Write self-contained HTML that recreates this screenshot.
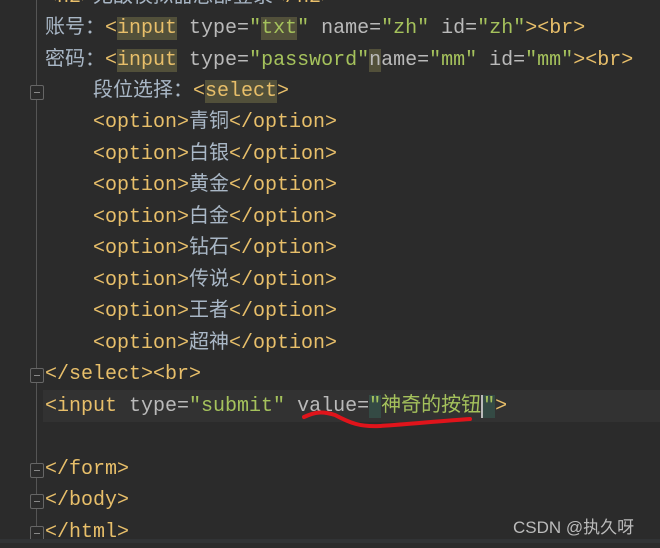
<!DOCTYPE html>
<html><head><meta charset="utf-8"><style>
body{margin:0;width:660px;height:543px;background:#2b2b2b;overflow:hidden;position:relative;font-family:"Liberation Mono","Noto Sans CJK SC",monospace;font-size:20px}
.gut{position:absolute;left:36px;top:0;width:1px;height:543px;background:#555}
.l{position:absolute;left:45px;height:31px;line-height:31px;white-space:pre;color:#a9b7c6;margin-top:2px}
.t{color:#e8bf6a}.a{color:#bababa}.v{color:#a5c25c}
.h{background:#52503a}
.cur{position:absolute;left:43px;top:390px;width:617px;height:32px;background:#323232}
.f{position:absolute;left:30px;width:12px;height:13px;background:#2b2b2b;border:1px solid #666;border-radius:2px;margin-top:2px}
.f:after{content:"";position:absolute;left:3px;top:6px;width:6px;height:1px;background:#888}
.sb{position:absolute;left:0;top:539px;width:660px;height:4px;background:#313335}
</style></head><body>
<div class="gut"></div>
<div class="cur"></div>
<div class="l" style="top:-20px"><span class="t">&lt;h2&gt;</span>无敌模拟器总部登录<span class="t">&lt;/h2&gt;</span></div>
<div class="l" style="top:11px">账号：<span class="t">&lt;<span class="h">input</span></span> <span class="a">type=</span><span class="v">"<span class="h">txt</span>"</span> <span class="a">name=</span><span class="v">"zh"</span> <span class="a">id=</span><span class="v">"zh"</span><span class="t">&gt;&lt;br&gt;</span></div>
<div class="l" style="top:43px">密码：<span class="t">&lt;<span class="h">input</span></span> <span class="a">type=</span><span class="v">"password"</span><span class="a"><span class="h">n</span>ame=</span><span class="v">"mm"</span> <span class="a">id=</span><span class="v">"mm"</span><span class="t">&gt;&lt;br&gt;</span></div>
<div class="l" style="top:74px">    段位选择：<span class="t">&lt;<span class="h">select</span>&gt;</span></div>
<div class="l" style="top:105px">    <span class="t">&lt;option&gt;</span>青铜<span class="t">&lt;/option&gt;</span></div>
<div class="l" style="top:137px">    <span class="t">&lt;option&gt;</span>白银<span class="t">&lt;/option&gt;</span></div>
<div class="l" style="top:168px">    <span class="t">&lt;option&gt;</span>黄金<span class="t">&lt;/option&gt;</span></div>
<div class="l" style="top:200px">    <span class="t">&lt;option&gt;</span>白金<span class="t">&lt;/option&gt;</span></div>
<div class="l" style="top:231px">    <span class="t">&lt;option&gt;</span>钻石<span class="t">&lt;/option&gt;</span></div>
<div class="l" style="top:263px">    <span class="t">&lt;option&gt;</span>传说<span class="t">&lt;/option&gt;</span></div>
<div class="l" style="top:294px">    <span class="t">&lt;option&gt;</span>王者<span class="t">&lt;/option&gt;</span></div>
<div class="l" style="top:326px">    <span class="t">&lt;option&gt;</span>超神<span class="t">&lt;/option&gt;</span></div>
<div class="l" style="top:357px"><span class="t">&lt;/select&gt;&lt;br&gt;</span></div>
<div class="l" style="top:389px"><span class="t">&lt;input</span> <span class="a">type=</span><span class="v">"submit"</span> <span class="a">value=</span><span class="v"><span style="background:#344a44">"</span>神奇的按钮<span style="background:#344a44;border-left:2px solid #bbb">"</span></span><span class="t">&gt;</span></div>
<div class="l" style="top:452px"><span class="t">&lt;/form&gt;</span></div>
<div class="l" style="top:483px"><span class="t">&lt;/body&gt;</span></div>
<div class="l" style="top:515px"><span class="t">&lt;/html&gt;</span></div>
<div class="f" style="top:83px"></div>
<div class="f" style="top:366px"></div>
<div class="f" style="top:461px"></div>
<div class="f" style="top:492px"></div>
<div class="f" style="top:524px"></div>
<svg style="position:absolute;left:0;top:0" width="660" height="543"><path d="M304 417 C315 412 322 411 335 415 C350 423 360 427 380 426 C410 424 440 421 470 419" stroke="#e0141b" stroke-width="4" fill="none" stroke-linecap="round"/></svg>
<div class="sb"></div>
<div style="position:absolute;left:513px;top:513px;font-family:'Liberation Sans','Noto Sans CJK SC',sans-serif;font-size:17px;color:#bbb">CSDN @执久呀</div>
</body></html>
